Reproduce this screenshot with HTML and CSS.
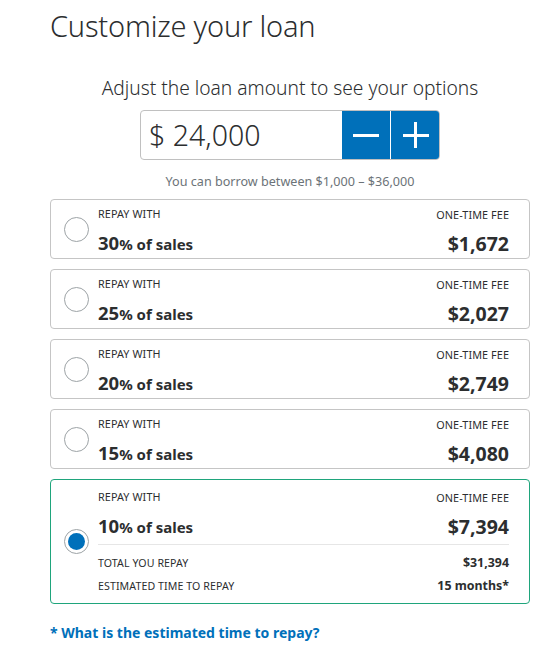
FILE: index.html
```html
<!DOCTYPE html>
<html>
<head>
<meta charset="utf-8">
<link rel="stylesheet" href="styles.css">
</head>
<body>
<div class="page">
  <h1 class="title">Customize your loan</h1>
  <p class="subtitle">Adjust the loan amount to see your options</p>
  <div class="amount-row">
    <div class="amount">
      <div class="amount-input">$ 24,000</div>
      <button class="step minus" aria-label="decrease"><span class="bar-h"></span></button>
      <button class="step plus" aria-label="increase"><span class="bar-h"></span><span class="bar-v"></span></button>
    </div>
  </div>
  <p class="hint">You can borrow between $1,000 – $36,000</p>

  <div class="options">
    <div class="card">
      <span class="radio"></span>
      <div class="body">
        <div class="row">
          <div class="left"><div class="label">REPAY WITH</div><div class="pct"><span class="num">30</span>% of sales</div></div>
          <div class="right"><div class="label">ONE-TIME FEE</div><div class="fee">$1,672</div></div>
        </div>
      </div>
    </div>
    <div class="card">
      <span class="radio"></span>
      <div class="body">
        <div class="row">
          <div class="left"><div class="label">REPAY WITH</div><div class="pct"><span class="num">25</span>% of sales</div></div>
          <div class="right"><div class="label">ONE-TIME FEE</div><div class="fee">$2,027</div></div>
        </div>
      </div>
    </div>
    <div class="card">
      <span class="radio"></span>
      <div class="body">
        <div class="row">
          <div class="left"><div class="label">REPAY WITH</div><div class="pct"><span class="num">20</span>% of sales</div></div>
          <div class="right"><div class="label">ONE-TIME FEE</div><div class="fee">$2,749</div></div>
        </div>
      </div>
    </div>
    <div class="card">
      <span class="radio"></span>
      <div class="body">
        <div class="row">
          <div class="left"><div class="label">REPAY WITH</div><div class="pct"><span class="num">15</span>% of sales</div></div>
          <div class="right"><div class="label">ONE-TIME FEE</div><div class="fee">$4,080</div></div>
        </div>
      </div>
    </div>
    <div class="card selected">
      <span class="radio checked"></span>
      <div class="body">
        <div class="row top">
          <div class="left"><div class="label">REPAY WITH</div><div class="pct"><span class="num">10</span>% of sales</div></div>
          <div class="right"><div class="label">ONE-TIME FEE</div><div class="fee">$7,394</div></div>
        </div>
        <div class="details">
          <div class="drow"><span class="dlabel">TOTAL YOU REPAY</span><span class="dval">$31,394</span></div>
          <div class="drow"><span class="dlabel">ESTIMATED TIME TO REPAY</span><span class="dval">15 months*</span></div>
        </div>
      </div>
    </div>
  </div>

  <a class="link" href="#">* What is the estimated time to repay?</a>
</div>
</body>
</html>
```
FILE: styles.css
```css
html, body {
  margin: 0;
  padding: 0;
  background: #ffffff;
}
body {
  font-family: "Noto Sans", "Open Sans", Arial, sans-serif;
  color: #2c2e2f;
}
.page {
  width: 480px;
  padding: 8px 0 0 50px;
}
.title {
  margin: 0;
  font-size: 29px;
  font-weight: 300;
  line-height: 36px;
  letter-spacing: -0.2px;
  color: #2c2e2f;
}
.subtitle {
  margin: 32px 0 0;
  text-align: center;
  font-size: 19.2px;
  font-weight: 300;
  line-height: 24px;
}
.amount-row {
  display: flex;
  justify-content: center;
  margin-top: 10px;
}
.amount {
  display: flex;
  width: 300px;
  height: 50px;
  border: 1px solid #c0c0c0;
  border-radius: 4px;
  box-sizing: border-box;
  overflow: hidden;
}
.amount-input {
  flex: 1;
  display: flex;
  align-items: center;
  padding-left: 8px;
  font-size: 28.5px;
  font-weight: 300;
  color: #2c2e2f;
}
.step {
  width: 49px;
  border: 0;
  margin: -1px 0;
  padding: 0;
  background: #0070ba;
  position: relative;
  display: flex;
  align-items: center;
  justify-content: center;
}
.step.minus {
  border-right: 1px solid #ffffff;
}
.step.plus {
  width: 49px;
  margin-right: -1px;
}
.bar-h {
  display: block;
  width: 26px;
  height: 3px;
  background: #ffffff;
}
.bar-v {
  position: absolute;
  left: 50%;
  top: 50%;
  width: 3px;
  height: 26px;
  margin: -13px 0 0 -1.5px;
  background: #ffffff;
}
.hint {
  margin: 14px 0 0;
  text-align: center;
  font-size: 12.6px;
  color: #6c7378;
  line-height: 16px;
}
.options {
  margin-top: 9px;
  display: flex;
  flex-direction: column;
  gap: 10px;
}
.card {
  display: flex;
  align-items: flex-start;
  border: 1px solid #c5c5c5;
  border-radius: 4px;
  height: 60px;
  box-sizing: border-box;
  padding-top: 7px;
}
.card.selected {
  border-color: #1fa57c;
  height: 125px;
  padding-top: 10px;
}
.radio {
  align-self: center;
  width: 25px;
  height: 25px;
  box-sizing: border-box;
  border: 1px solid #9da3a6;
  border-radius: 50%;
  margin: -7px 9px 0 13px;
  flex: none;
  position: relative;
}
.card.selected .radio {
  margin-top: -10px;
}
.radio.checked::after {
  content: "";
  position: absolute;
  left: 3px;
  top: 3px;
  width: 17px;
  height: 17px;
  border-radius: 50%;
  background: #0070ba;
}
.body {
  flex: 1;
  padding-right: 20px;
}
.row {
  display: flex;
  justify-content: space-between;
  align-items: flex-end;
}
.left, .right {
  display: flex;
  flex-direction: column;
}
.right {
  align-items: flex-end;
}
.label {
  font-size: 10.8px;
  line-height: 14px;
  color: #2c2e2f;
  letter-spacing: 0.1px;
}
.pct {
  margin-top: 11px;
  font-size: 15px;
  font-weight: 700;
  line-height: 22px;
}
.num {
  font-size: 18.5px;
}
.fee {
  margin-top: 11px;
  font-size: 19.5px;
  font-weight: 700;
  line-height: 22px;
}
.details {
  margin-top: 6px;
  border-top: 1px solid #e6e6e6;
  padding-top: 6px;
}
.drow {
  display: flex;
  justify-content: space-between;
  align-items: center;
  height: 23px;
}
.dlabel {
  font-size: 10.6px;
  letter-spacing: 0.1px;
}
.dval {
  font-size: 12.4px;
  font-weight: 700;
}
.link {
  display: block;
  margin-top: 19px;
  font-size: 14px;
  font-weight: 700;
  color: #0070ba;
  text-decoration: none;
}
```
